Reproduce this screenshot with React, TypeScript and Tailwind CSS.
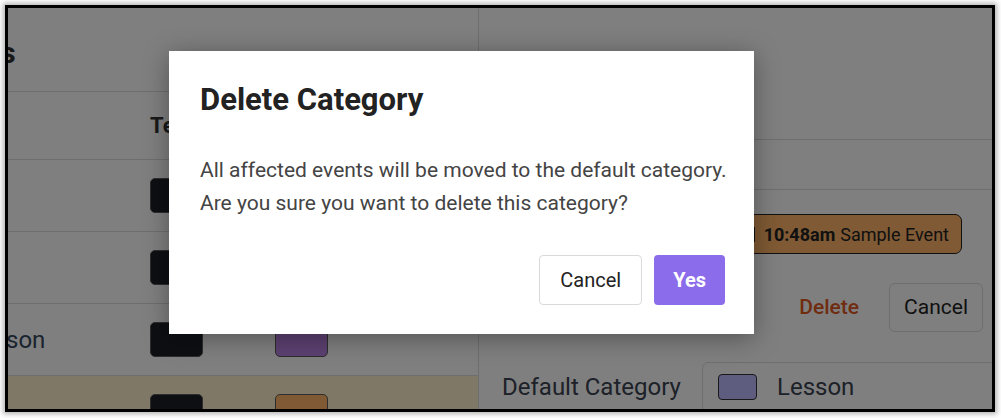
const rows = [
  { name: '', text: '#1b1e26', bg: '#9cc3ef', selected: false },
  { name: '', text: '#1b1e26', bg: '#a6e2b3', selected: false },
  { name: 'Lesson', text: '#1b1e26', bg: '#b982e2', selected: false },
  { name: '', text: '#1b1e26', bg: '#ffb469', selected: true },
];

function Swatch({ color }: { color: string }) {
  return (
    <div
      className="h-[35px] w-[53px] rounded-[5px] border border-[#5a5a5a]"
      style={{ backgroundColor: color }}
    />
  );
}

function CategoryList() {
  return (
    <div className="w-[471px] shrink-0 overflow-hidden border-r border-[#dcdcdc]">
      <div className="-ml-[64px] pl-[24px] text-[#34495e]">
        <div className="h-[84px] border-b border-[#dcdcdc] pt-[27px]">
          <h2 className="-ml-[99px] whitespace-nowrap text-[30px] leading-[36px] font-bold text-[#333]">
            Categories
          </h2>
        </div>
        <div className="flex h-[68px] items-center border-b border-[#dcdcdc] text-[22px] font-bold text-[#333]">
          <div className="w-[182px]" />
          <div className="w-[125px]">Text Color</div>
          <div>Background</div>
        </div>
        {rows.map((r, i) => (
          <div
            key={i}
            className={
              r.selected
                ? 'flex h-[72px] items-center border-b border-[#dcdcdc] bg-[#fef0cd] text-[24px]'
                : 'flex h-[72px] items-center border-b border-[#dcdcdc] text-[24px]'
            }
          >
            <div className="w-[182px] whitespace-nowrap">{r.name}</div>
            <div className="w-[125px]">
              <Swatch color={r.text} />
            </div>
            <Swatch color={r.bg} />
          </div>
        ))}
      </div>
    </div>
  );
}

function CategoryEditor() {
  return (
    <div className="min-w-0 flex-1 text-[#3a4250]">
      <div className="h-[132px] border-b border-[#dcdcdc] pl-[23px] pt-[50px]">
        <h2 className="text-[26px] font-bold text-[#333]">Edit Category</h2>
      </div>
      <div className="flex h-[50px] items-center border-b border-[#dcdcdc] pl-[23px] text-[20px]">
        Preview
      </div>
      <div className="flex justify-end pr-[30px] pt-[24px]">
        <div className="flex h-[40px] items-center rounded-[7px] border border-[#222] bg-[#ffb469] px-[12px] text-[18px] text-[#222]">
          <span className="mr-[9px] inline-block h-[15px] w-[12px] border-[1.5px] border-[#222]" />
          <b className="mr-[5px]">10:48am</b>
          <span>Sample Event</span>
        </div>
      </div>
      <div className="mt-[29px] flex items-center justify-end gap-[30px] pr-[9px]">
        <button className="text-[21px] font-medium text-[#e0581f]">Delete</button>
        <button className="h-[49px] rounded-[6px] border border-[#dcdcdc] bg-white px-[14px] text-[21px] text-[#222]">
          Cancel
        </button>
      </div>
      <div className="mt-[30px] flex items-center pl-[23px]">
        <div className="w-[200px] shrink-0 whitespace-nowrap text-[24px]">Default Category</div>
        <div className="flex h-[50px] w-[320px] shrink-0 items-center rounded-[6px] border border-[#dcdcdc] pl-[15px]">
          <div className="h-[26px] w-[39px] rounded-[4px] border border-[#333] bg-[#bdb8ff]" />
          <span className="ml-[20px] text-[24px]">Lesson</span>
        </div>
      </div>
    </div>
  );
}

function DeleteDialog() {
  return (
    <div className="absolute left-[161px] top-[43px] h-[283px] w-[585px] bg-white pl-[31px] pr-[29px] pt-[30px] shadow-[0_4px_24px_rgba(0,0,0,0.35)]">
      <h3 className="text-[31px] leading-[38px] font-bold text-[#222]">Delete Category</h3>
      <p className="mt-[35px] whitespace-nowrap text-[21px] leading-[33px] text-[#444]">
        All affected events will be moved to the default category.
        <br />
        Are you sure you want to delete this category?
      </p>
      <div className="mt-[35px] flex justify-end gap-[12px]">
        <button className="h-[50px] rounded-[4px] border border-[#d9d9d9] bg-white px-[20px] text-[20px] text-[#222]">
          Cancel
        </button>
        <button className="h-[50px] rounded-[4px] bg-[#8b6cea] px-[19px] text-[20px] font-bold text-white">
          Yes
        </button>
      </div>
    </div>
  );
}

export default function App() {
  return (
    <div className="h-[418px] w-[1001px] bg-white pl-[5px] pt-[5px] font-['Roboto',sans-serif]">
      <div className="relative h-[407px] w-[990px] overflow-hidden border-[3px] border-black bg-white shadow-[0_0_5px_2px_rgba(0,0,0,0.3)]">
        <div className="flex h-full">
          <CategoryList />
          <CategoryEditor />
        </div>
        <div className="absolute inset-0 bg-black/50" />
        <DeleteDialog />
      </div>
    </div>
  );
}
